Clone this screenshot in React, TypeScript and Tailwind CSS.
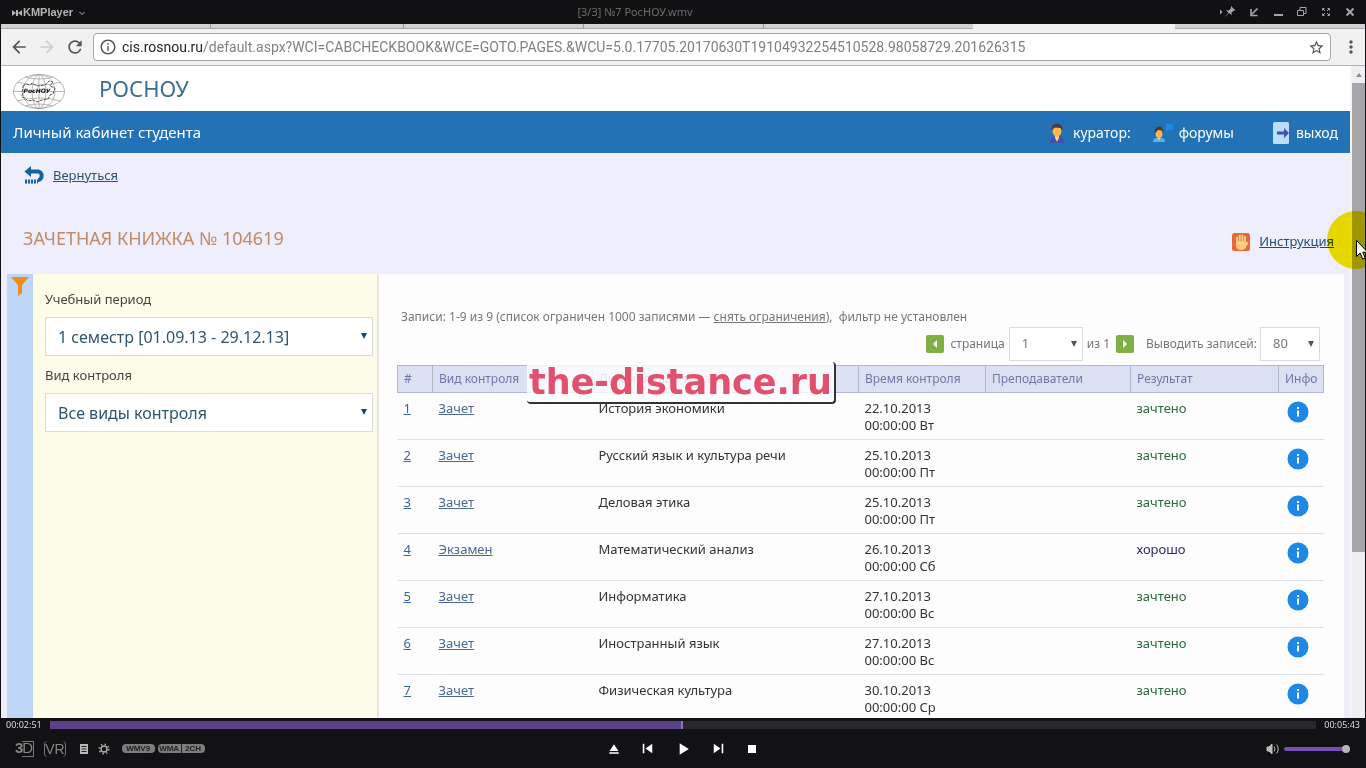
import React from "react";
import {
  MdArrowBack,
  MdArrowForward,
  MdRefresh,
  MdInfoOutline,
  MdStarBorder,
  MdMoreVert,
  MdSkipNext,
  MdSkipPrevious,
  MdPlayArrow,
  MdEject,
  MdStop,
} from "react-icons/md";

const rows = [
  { n: 1, kind: "Зачет", name: "История экономики", date: "22.10.2013", time: "00:00:00 Вт", result: "зачтено" },
  { n: 2, kind: "Зачет", name: "Русский язык и культура речи", date: "25.10.2013", time: "00:00:00 Пт", result: "зачтено" },
  { n: 3, kind: "Зачет", name: "Деловая этика", date: "25.10.2013", time: "00:00:00 Пт", result: "зачтено" },
  { n: 4, kind: "Экзамен", name: "Математический анализ", date: "26.10.2013", time: "00:00:00 Сб", result: "хорошо" },
  { n: 5, kind: "Зачет", name: "Информатика", date: "27.10.2013", time: "00:00:00 Вс", result: "зачтено" },
  { n: 6, kind: "Зачет", name: "Иностранный язык", date: "27.10.2013", time: "00:00:00 Вс", result: "зачтено" },
  { n: 7, kind: "Зачет", name: "Физическая культура", date: "30.10.2013", time: "00:00:00 Ср", result: "зачтено" },
];

function TitleBar() {
  return (
    <header className="grid h-6 shrink-0 grid-cols-3 items-center bg-[#111113] text-[#b5b5b5]">
      <button className="flex items-center gap-px pl-3 pt-px font-['Liberation_Sans'] text-[11px] font-bold">
        <svg className="h-2 w-[10px]" viewBox="0 0 10 8" fill="currentColor">
          <path d="M0 1l4 3-4 3zM4 1h2v6H4zM10 1L6 4l4 3z" />
        </svg>
        KMPlayer
        <svg className="ml-1 h-2 w-2" viewBox="0 0 8 8" fill="none" stroke="currentColor">
          <path d="M1.5 3L4 5.500 6.500 3" />
        </svg>
      </button>
      <p className="pr-24 text-center font-['Noto_Sans'] text-[11px] leading-4 text-[#6c6c6c]">[3/3] №7 РосНОУ.wmv</p>
      <div className="flex items-center justify-end gap-[12px] pr-[10px] text-[#a5a5a5]">
        <button aria-label="Поверх окон">
          <svg className="h-3 w-4" viewBox="0 0 16 12" fill="currentColor">
            <path d="M0 3.500l2.500 2.500L0 8.500zM11 0l4.500 4.500-2 .2-2 2 .2 2.600-2.500-2.300L4.500 11.500l4-4.700L6 4.300l2.800.1 2-2z" />
          </svg>
        </button>
        <button aria-label="Свернуть в угол">
          <svg className="h-3 w-3" viewBox="0 0 12 12" fill="none" stroke="currentColor" strokeWidth="1.600">
            <path d="M9.500 2.500L4 8M3 3v6.500h6.500" />
          </svg>
        </button>
        <button aria-label="Свернуть">
          <svg className="h-3 w-3" viewBox="0 0 12 12" fill="currentColor">
            <path d="M2 8h9v2H2z" />
          </svg>
        </button>
        <button aria-label="Восстановить">
          <svg className="h-3 w-3" viewBox="0 0 12 12" fill="none" stroke="currentColor">
            <path d="M1.500 4.500h6v5h-6zM4 4V1.500h6v6H8" />
          </svg>
        </button>
        <button aria-label="Во весь экран">
          <svg className="h-3 w-3" viewBox="0 0 12 12" fill="none" stroke="currentColor">
            <path d="M2.500 4.500v-2h2M7.500 2.500h2v2M9.500 7.500v2h-2M4.500 9.500h-2v-2M5 5l-2-2M7 5l2-2M5 7L3 9M7 7l2 2" />
          </svg>
        </button>
        <button aria-label="Закрыть">
          <svg className="h-3 w-3" viewBox="0 0 12 12" fill="none" stroke="currentColor" strokeWidth="2">
            <path d="M2.500 2.500l7 7M9.500 2.500l-7 7" />
          </svg>
        </button>
      </div>
    </header>
  );
}

function BrowserBar() {
  return (
    <div className="shrink-0">
      <div className="flex h-[5px] border-b border-[#a9a9a9] bg-[#d2d0d0]">
        <div className="w-[210px] border-r border-[#999]" />
        <div className="w-[193px] border-r border-[#999]" />
        <div className="w-[180px] border-r border-[#999]" />
        <div className="w-[180px] border-r border-[#999]" />
        <div className="w-[209px]" />
        <div className="-mb-px h-[5px] w-[202px] bg-[#f1f1f1]" />
      </div>
      <div className="flex h-[37px] items-center border-b border-[#b4b4b4] bg-[#f2f1f1] text-[#555]">
        <button aria-label="Назад" className="ml-2"><MdArrowBack size={20} /></button>
        <button aria-label="Вперёд" className="ml-2 text-[#d0d0d0]"><MdArrowForward size={20} /></button>
        <button aria-label="Обновить" className="ml-2"><MdRefresh size={20} /></button>
        <div className="ml-2 flex h-7 flex-1 items-center rounded-sm border border-[#a9a9a9] bg-white px-[5px]">
          <MdInfoOutline size={18} />
          <div className="ml-[5px] min-w-0 flex-1 truncate font-['Roboto'] text-sm text-[#808080]">
            <span className="text-[#222]">cis.rosnou.ru</span>
            /default.aspx?WCI=CABCHECKBOOK&amp;WCE=GOTO.PAGES.&amp;WCU=5.0.17705.20170630T19104932254510528.98058729.201626315
          </div>
          <button aria-label="Добавить в закладки"><MdStarBorder size={17} /></button>
        </div>
        <button aria-label="Меню" className="ml-[10px] mr-1"><MdMoreVert size={20} /></button>
      </div>
    </div>
  );
}

function GlobeLogo() {
  return (
    <svg className="h-[35px] w-[52px]" viewBox="0 0 52 35" fill="none" stroke="#999" strokeWidth=".7">
      <ellipse cx="26" cy="17.500" rx="25.500" ry="17" />
      <ellipse cx="26" cy="17.500" rx="16" ry="17" />
      <ellipse cx="26" cy="17.500" rx="7" ry="17" />
      <path d="M26 0v35M0 17.500h52M4 8q22 6 44 0M4 27q22-6 44 0M12 3q14 4 28 0M12 32q14-4 28 0" />
      <path d="M10 12l3-2 4 1 2-2 5 3 8-1 4-4 4 1-3 4 5 2-2 6-3 1-2 4-6 1-5 2-4-2-5 1-3-3-3-1z" stroke="#555" strokeWidth="1" strokeDasharray="3 1" />
      <text x="24" y="19" textAnchor="middle" fill="#111" stroke="none" fontSize="6" fontWeight="700" fontStyle="italic" fontFamily="DejaVu Sans, sans-serif">РосНОУ</text>
    </svg>
  );
}

function PersonIcon() {
  return (
    <svg className="h-5 w-4" viewBox="0 0 16 20">
      <path d="M1 20q0-6 4-6h6q4 0 4 6z" fill="#4450a8" />
      <path d="M6 12h4v3l-2 4-2-4z" fill="#ffcc80" />
      <ellipse cx="8" cy="8" rx="4.500" ry="5.500" fill="#ffb74d" />
      <path d="M3 8Q1 1 8 .5 15 1 13 8L11.500 5 6 4.500 4 6z" fill="#4a3c45" />
    </svg>
  );
}

function ForumIcon() {
  return (
    <svg className="h-[18px] w-5" viewBox="0 0 20 18">
      <path d="M13 0h7v6h-5l-2 2z" fill="#1e88e5" />
      <path d="M0 18q0-4 4-4h4q4 0 4 4z" fill="#4fb4f5" />
      <ellipse cx="6" cy="9.500" rx="3.500" ry="4.500" fill="#ffb74d" />
      <path d="M2 9.500q-1-6.500 4-7 5 0 4 7L8.500 6.500 5 6z" fill="#4a3c35" />
      <path d="M4.500 14h3L6 16.500z" fill="#ffcc80" />
    </svg>
  );
}

function ExitIcon() {
  return (
    <svg className="h-[22px] w-[18px]" viewBox="0 0 18 22">
      <rect x="1" y="0" width="16" height="22" rx="1.500" fill="#bbdefb" />
      <path d="M5 9.500h7V6l5 5-5 5v-3.500H5z" fill="#4550b5" />
    </svg>
  );
}

function PageHeader() {
  return (
    <>
      <div className="flex h-[45px] items-center bg-white pl-3">
        <div className="pt-[6px]"><GlobeLogo /></div>
        <h1 className="ml-[34px] text-[22px] text-[#39708f]">РОСНОУ</h1>
      </div>
      <nav className="flex h-[42px] items-center bg-[#2272b5] pl-3 pr-3 pt-px text-white">
        <h2 className="flex-1 text-[15px]">Личный кабинет студента</h2>
        <a href="#curator" className="flex items-center gap-2 text-sm"><PersonIcon />куратор:</a>
        <a href="#forums" className="ml-[22px] flex items-center gap-[6px] text-sm"><ForumIcon />форумы</a>
        <a href="#exit" className="ml-[38px] flex items-center gap-[6px] text-sm"><ExitIcon />выход</a>
      </nav>
      <div className="flex h-[121px] flex-col justify-between bg-[#eeeefc] pl-[22px] pr-4 pt-3 pb-4">
        <a href="#back" className="flex items-center gap-2 self-start text-[13px] leading-5 text-[#2d4f70]">
          <svg className="h-[18px] w-[22px]" viewBox="0 0 22 18" fill="none" stroke="#15619f">
            <path d="M7 5.500h8a3.500 4 0 0 1 0 8.500" strokeWidth="4" />
            <path d="M1.500 5.500L8 0v11z" fill="#15619f" stroke="none" />
            <path d="M2 15.500h13" strokeWidth="4" strokeDasharray="2 1" />
          </svg>
          <span className="underline">Вернуться</span>
        </a>
        <div className="flex items-center justify-between">
          <h3 className="pb-2 text-lg leading-6 text-[#c08b66]">ЗАЧЕТНАЯ КНИЖКА № 104619</h3>
          <a href="#help" className="flex items-center gap-2 text-[13px] text-[#234a75]">
            <svg className="h-5 w-5" viewBox="0 0 20 20">
              <rect x="1" y="1" width="18" height="18" rx="2.500" fill="#e8683c" />
              <path d="M6 12V5.500M8.700 10V3.500M11.400 10V3.500M14 11V5" stroke="#ffcc80" strokeWidth="2" strokeLinecap="round" />
              <path d="M5 9.500h10l1.500 1.200L17 9.500q1 1-1 4-2 4.500-6 4.500-5 0-5-5z" fill="#ffcc80" />
            </svg>
            <span className="underline">Инструкция</span>
          </a>
        </div>
      </div>
    </>
  );
}

function FilterSelect({ id, label, value }: { id: string; label: string; value: string }) {
  return (
    <div className="mb-[9px]">
      <label htmlFor={id} className="block text-[13px] leading-5 text-[#444]">{label}</label>
      <div className="relative mt-2">
        <select id={id} className="h-[39px] w-full appearance-none border border-[#dcdcdc] bg-white pl-3 text-base text-[#2f5570]">
          <option>{value}</option>
        </select>
        <svg className="pointer-events-none absolute right-[6px] top-4 h-[6px] w-[6px]" viewBox="0 0 6 6" fill="#0f4a78">
          <path d="M0 0h6L3 6z" />
        </svg>
      </div>
    </div>
  );
}

function SmallSelect({ id, value, width, label }: { id: string; value: string; width: string; label: string }) {
  return (
    <div className={`relative ${width}`}>
      <select id={id} aria-label={label} className="h-[34px] w-full appearance-none border border-[#d9dce0] bg-white pl-3 text-[13px] text-[#777]">
        <option>{value}</option>
      </select>
      <svg className="pointer-events-none absolute right-[6px] top-[14px] h-[6px] w-[6px]" viewBox="0 0 6 6" fill="#555">
        <path d="M0 0h6L3 6z" />
      </svg>
    </div>
  );
}

function ArrowButton({ label, d }: { label: string; d: string }) {
  return (
    <button aria-label={label} className="flex h-[18px] w-[18px] items-center justify-center rounded-[2px] bg-[#7faf45]">
      <svg className="h-2 w-2" viewBox="0 0 8 8" fill="#fff"><path d={d} /></svg>
    </button>
  );
}

function Watermark() {
  return (
    <div className="absolute left-[130px] -top-[3px] flex h-[42px] w-[309px] items-center justify-center rounded-[4px] border-r-2 border-b-2 border-[#333] bg-white/80 pt-px font-['DejaVu_Sans'] text-[35px] font-bold text-[#e3506e]">
      the-distance.ru
    </div>
  );
}

function Records() {
  const th = "border border-[#b3b9cd] px-[6px] text-left font-normal";
  return (
    <section className="flex-1 bg-[#fdfdfd] pl-[18px] pr-5 pt-[34px]">
      <p className="pl-1 text-xs leading-[18px] text-[#777]">
        Записи: 1-9 из 9 (список ограничен 1000 записями — <a href="#all" className="underline">снять ограничения</a>),&nbsp; фильтр не установлен
      </p>
      <div className="flex items-center justify-end pr-1 pt-px text-xs text-[#777]">
        <ArrowButton label="Предыдущая страница" d="M6 0v8L2 4z" />
        <span className="ml-[6px] mr-1">страница</span>
        <SmallSelect id="page" label="Страница" value="1" width="w-[74px]" />
        <span className="ml-1 mr-[6px]">из 1</span>
        <ArrowButton label="Следующая страница" d="M2 0v8l4-4z" />
        <label htmlFor="size" className="ml-3 mr-[3px]">Выводить записей:</label>
        <SmallSelect id="size" label="Выводить записей" value="80" width="w-[60px]" />
      </div>
      <div className="relative mt-1">
        <table className="w-full table-fixed border-collapse text-[13px] text-[#333]">
          <colgroup>
            <col className="w-[35px]" />
            <col className="w-[160px]" />
            <col />
            <col className="w-[127px]" />
            <col className="w-[145px]" />
            <col className="w-[148px]" />
            <col className="w-[45px]" />
          </colgroup>
          <thead>
            <tr className="h-[27px] bg-[#dbe1f3] text-xs text-[#7277a8]">
              <th className={th}>#</th>
              <th className={th}>Вид контроля</th>
              <th className={th}>Дисциплина / тема</th>
              <th className={th}>Время контроля</th>
              <th className={th}>Преподаватели</th>
              <th className={th}>Результат</th>
              <th className={th}>Инфо</th>
            </tr>
          </thead>
          <tbody>
            {rows.map((r) => (
              <tr key={r.n} className="h-[47px] border-b border-[#e0e0ea] align-top leading-[17px] *:px-[6px] *:pt-[7px]">
                <td><a href={`#row-${r.n}`} className="text-[#3d64a0] underline">{r.n}</a></td>
                <td><a href={`#kind-${r.n}`} className="text-[#4a6796] underline">{r.kind}</a></td>
                <td>{r.name}</td>
                <td>{r.date}<br />{r.time}</td>
                <td />
                <td className={r.result === "хорошо" ? "text-[#292970]" : "text-[#2c6a3c]"}>{r.result}</td>
                <td>
                  <button aria-label={`Информация ${r.n}`} className="ml-[2px] mt-px block">
                    <svg className="h-[22px] w-[22px]" viewBox="0 0 22 22">
                      <circle cx="11" cy="11" r="10.500" fill="#1e88e5" />
                      <path d="M10 6h2v2h-2zM10 9.500h2v6h-2z" fill="#fff" />
                    </svg>
                  </button>
                </td>
              </tr>
            ))}
          </tbody>
        </table>
        <Watermark />
      </div>
    </section>
  );
}

function Scrollbar() {
  return (
    <div className="flex w-[13px] shrink-0 flex-col bg-[#efeff1]">
      <div className="flex h-[17px] items-center justify-center">
        <svg className="h-1 w-[6px]" viewBox="0 0 6 4" fill="#8a8a8a"><path d="M0 4l3-4 3 4z" /></svg>
      </div>
      <div className="h-[72%] bg-[#a6a6a8]" />
    </div>
  );
}

function Pointer() {
  return (
    <>
      <div className="absolute -right-[19px] top-[211px] h-[58px] w-[58px] rounded-full bg-[#f6e600] mix-blend-multiply" />
      <svg className="absolute -right-[3px] top-[240px] h-5 w-[13px]" viewBox="0 0 13 20" fill="#fff" stroke="#000">
        <path d="M.5.5v16l3.700-3.500 2.500 6 2.500-1-2.500-5.800h5z" />
      </svg>
    </>
  );
}

function PlayerControls() {
  return (
    <footer className="shrink-0 bg-[#121214]">
      <div className="flex h-[14px] items-center font-['Noto_Sans'] text-[9px] text-[#ddd]">
        <span className="w-[50px] pl-[6px]">00:02:51</span>
        <div className="h-2 flex-1 bg-[#28282a]">
          <div className="h-full w-1/2 border-r-2 border-[#8d72b8] bg-[#58408a]" />
        </div>
        <span className="w-[50px] pr-[6px] text-right">00:05:43</span>
      </div>
      <div className="grid h-9 grid-cols-3 items-center pb-[3px]">
        <div className="flex items-center pl-[15px] font-['Liberation_Sans'] text-[#858585]">
          <button className="flex h-4 items-center text-[15px] font-bold">
            3<span className="-ml-px flex h-4 items-center border border-l-0 border-[#777] font-normal">D</span>
          </button>
          <button className="ml-[10px] flex h-4 items-center rounded-sm border-x border-[#777] text-sm">VR</button>
          <button aria-label="Плейлист" className="ml-[14px]">
            <svg className="h-[10px] w-2" viewBox="0 0 8 10"><path d="M0 0h8v10H0z" fill="#bbb" /><path d="M1.500 2.500h5M1.500 5h5M1.500 7.500h5" stroke="#222" /></svg>
          </button>
          <button aria-label="Настройки" className="ml-[10px]">
            <svg className="h-3 w-3" viewBox="0 0 12 12" fill="none" stroke="#aaa">
              <circle cx="6" cy="6" r="3" strokeWidth="1.500" />
              <circle cx="6" cy="6" r="4.800" strokeWidth="1.500" strokeDasharray="1.500 2.270" />
            </svg>
          </button>
          <div className="ml-3 flex h-[9px] items-center gap-[3px] text-[8px] font-bold leading-[9px] text-[#222]">
            <span className="w-[33px] rounded-sm bg-[#7c7c7c] text-center">WMV9</span>
            <span className="flex overflow-hidden rounded-sm bg-[#7c7c7c] text-center">
              <span className="w-6 border-r border-[#222]">WMA</span>
              <span className="w-[23px]">2CH</span>
            </span>
          </div>
        </div>
        <div className="flex items-center justify-center gap-4 text-white">
          <button aria-label="Открыть"><MdEject size={16} /></button>
          <button aria-label="Предыдущий"><MdSkipPrevious size={19} /></button>
          <button aria-label="Воспроизвести"><MdPlayArrow size={20} /></button>
          <button aria-label="Следующий"><MdSkipNext size={19} /></button>
          <button aria-label="Остановить"><MdStop size={16} /></button>
        </div>
        <div className="flex items-center justify-end gap-1 pr-4">
          <svg className="h-3 w-[14px]" viewBox="0 0 14 12" fill="none" stroke="#bbb">
            <path d="M1 4h2l3-3v10L3 8H1z" fill="#bbb" />
            <path d="M8 3.500q2 2.500 0 5M10.500 1.500q3.500 4.500 0 9" />
          </svg>
          <div className="flex h-1 w-[66px] items-center rounded-full bg-[#7650b4]">
            <div className="ml-auto h-2 w-2 rounded-full bg-[#b5b5b5]" />
          </div>
        </div>
      </div>
    </footer>
  );
}

export default function App() {
  return (
    <div className="relative flex h-screen flex-col overflow-hidden bg-[#111113] font-['Noto_Sans',sans-serif]">
      <TitleBar />
      <main className="mx-px flex min-h-0 flex-1 flex-col overflow-hidden">
        <BrowserBar />
        <div className="flex min-h-0 flex-1 bg-[#f4f4fb]">
          <div className="mr-[2px] flex min-w-0 flex-1 flex-col overflow-hidden">
            <PageHeader />
            <div className="flex min-h-0 flex-1 bg-[#eeeefa] pl-[6px] pr-[6px]">
              <div className="w-[26px] shrink-0 bg-[#bdd5f6] pl-1 pt-[3px]">
                <svg className="h-[19px] w-[18px]" viewBox="0 0 18 19">
                  <path d="M0 0h18l-7 8v8l-4 3V8z" fill="#f28c13" />
                </svg>
              </div>
              <aside className="w-[346px] shrink-0 border-r-2 border-[#e4e4e0] bg-[#fcfce9] pl-3 pr-1 pt-[15px]">
                <FilterSelect id="period" label="Учебный период" value="1 семестр [01.09.13 - 29.12.13]" />
                <FilterSelect id="kind" label="Вид контроля" value="Все виды контроля" />
              </aside>
              <Records />
            </div>
          </div>
          <Scrollbar />
        </div>
      </main>
      <PlayerControls />
      <Pointer />
    </div>
  );
}
